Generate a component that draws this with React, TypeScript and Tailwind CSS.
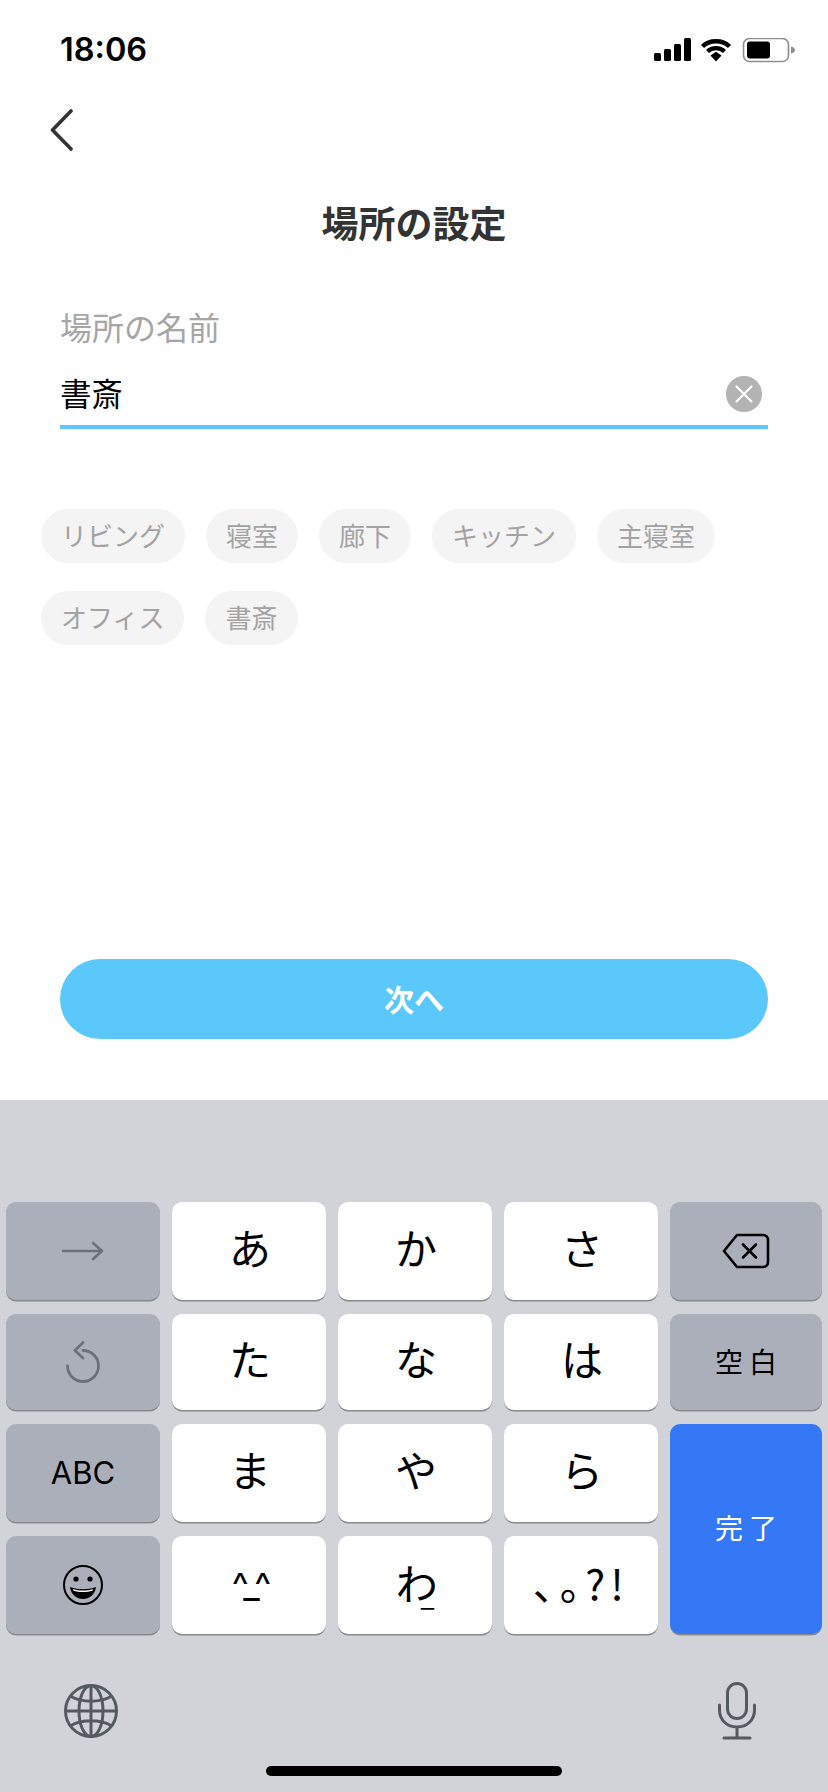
const font = { fontFamily: '"Noto Sans CJK JP", Inter, sans-serif' };

const chips = ['リビング', '寝室', '廊下', 'キッチン', '主寝室', 'オフィス', '書斎'];

function StatusIcons() {
  return (
    <svg width="142" height="26" viewBox="0 0 142 26" className="block">
      <rect x="0" y="15" width="7" height="8" rx="1.5" fill="#000" />
      <rect x="10" y="11" width="7" height="12" rx="1.5" fill="#000" />
      <rect x="20" y="6" width="7" height="17" rx="1.5" fill="#000" />
      <rect x="30" y="0" width="7" height="23" rx="1.5" fill="#000" />
      <path d="M48.5 8.5C55.5 1.5 68.5 1.5 75.5 8.5" fill="none" stroke="#000" strokeWidth="4.4" strokeLinecap="butt" />
      <path d="M53.5 13.5C58 9 66 9 70.5 13.5" fill="none" stroke="#000" strokeWidth="4.2" />
      <path d="M56.5 17.5L62 13.8L67.5 17.5L62 23.5Z" fill="#000" />
      <rect x="89.5" y="0.5" width="45" height="23" rx="6" fill="none" stroke="#8e8e8e" strokeWidth="1.6" />
      <rect x="93" y="3.5" width="23" height="17" rx="3" fill="#000" />
      <path d="M137 8.5C139.5 9 141 10.5 141 12C141 13.5 139.5 15 137 15.5Z" fill="#8e8e8e" />
    </svg>
  );
}

function Key({ children, kind = 'white', className = '' }: { children: React.ReactNode; kind?: 'white' | 'gray' | 'blue'; className?: string }) {
  const bg = kind === 'white' ? 'bg-white text-black' : kind === 'gray' ? 'bg-[#abafba] text-black' : 'bg-[#3478f6] text-white';
  return (
    <div className={`flex items-center justify-center rounded-[10px] shadow-[0_1.5px_0_#898a8e] ${bg} ${className}`}>
      {children}
    </div>
  );
}

function Kana({ children }: { children: React.ReactNode }) {
  return <Key className="pb-[8px] pl-[2px] text-[42px] leading-none">{children}</Key>;
}

export default function App() {
  return (
    <div className="flex h-[1792px] w-[828px] flex-col overflow-hidden bg-white" style={font}>
      <div className="flex h-[1100px] flex-col">
        <div className="flex h-[99px] items-center justify-between pl-[60px] pr-[32px] pt-[2px]">
          <span className="text-[32.5px] font-semibold leading-none text-black" style={{ fontFamily: 'Inter, sans-serif' }}>18:06</span>
          <StatusIcons />
        </div>

        <svg width="24" height="42" viewBox="0 0 24 42" className="ml-[50px] mt-[10px] block">
          <path d="M21 2L2.5 21L21 40" fill="none" stroke="#333" strokeWidth="3.6" strokeLinecap="round" strokeLinejoin="round" />
        </svg>

        <h1 className="mt-[53px] text-center text-[37px] font-bold leading-[36px] text-[#333]">場所の設定</h1>

        <div className="mt-[70px] px-[60px]">
          <p className="text-[32px] leading-[32px] text-[#a6a6a6]">場所の名前</p>
          <div className="mt-[22px] flex h-[60px] items-center justify-between">
            <span className="mb-[3px] text-[31.5px] leading-none text-black">書斎</span>
            <span className="mr-[6px] flex h-[36px] w-[36px] items-center justify-center rounded-full bg-[#b3b3b3]">
              <svg width="20" height="20" viewBox="0 0 20 20">
                <path d="M2.5 2.5L17.5 17.5M17.5 2.5L2.5 17.5" stroke="#fff" strokeWidth="2.2" strokeLinecap="round" />
              </svg>
            </span>
          </div>
          <div className="mt-[1px] h-[4px] w-[708px] bg-[#5ac8fa]" />
        </div>

        <div className="mt-[80px] flex w-[760px] flex-wrap gap-x-[21px] gap-y-[28px] pl-[41px]">
          {chips.map((chip) => (
            <span key={chip} className="flex h-[54px] items-center rounded-full bg-[#f4f4f4] px-[20px] pb-[3px] text-[26px] leading-none text-[#a3a3a3]">
              {chip}
            </span>
          ))}
        </div>

        <button className="mx-[60px] mt-[314px] flex h-[80px] w-[708px] items-center justify-center rounded-full bg-[#5ac8fa] pb-[2px] text-[30px] font-bold text-white">
          次へ
        </button>
      </div>

      <div className="flex-1 bg-[#d1d3d9]">
        <div className="mt-[102px] grid grid-cols-[154px_154px_154px_154px_152px] grid-rows-[98px_96px_98px_98px] gap-x-[12px] gap-y-[14px] pl-[6px]">
          <Key kind="gray">
            <svg width="42" height="20" viewBox="0 0 42 20">
              <path d="M1 10H40M31 2L40 10L31 18" fill="none" stroke="#6d7079" strokeWidth="2.6" strokeLinecap="round" strokeLinejoin="round" />
            </svg>
          </Key>
          <Kana>あ</Kana>
          <Kana>か</Kana>
          <Kana>さ</Kana>
          <Key kind="gray">
            <svg width="48" height="36" viewBox="0 0 48 36">
              <path d="M15 2H41C44 2 46 4 46 7V29C46 32 44 34 41 34H15L2 18Z" fill="none" stroke="#000" strokeWidth="2.6" strokeLinejoin="round" />
              <path d="M21 11.5L34 24.5M34 11.5L21 24.5" stroke="#000" strokeWidth="2.6" strokeLinecap="round" />
            </svg>
          </Key>

          <Key kind="gray">
            <svg width="36" height="42" viewBox="0 0 36 42">
              <path d="M18 9.5A15.5 15.5 0 1 1 2.5 25" fill="none" stroke="#6d7079" strokeWidth="2.8" strokeLinecap="round" />
              <path d="M18 1.5L10 9.5L18 17" fill="none" stroke="#6d7079" strokeWidth="2.8" strokeLinecap="round" strokeLinejoin="round" />
            </svg>
          </Key>
          <Kana>た</Kana>
          <Kana>な</Kana>
          <Kana>は</Kana>
          <Key kind="gray" className="pb-[2px] pl-[6px] text-[28px] tracking-[6px]">空白</Key>

          <Key kind="gray" className="text-[31px]"><span style={{ fontFamily: 'Inter, sans-serif' }}>ABC</span></Key>
          <Kana>ま</Kana>
          <Kana>や</Kana>
          <Kana>ら</Kana>
          <Key kind="blue" className="row-span-2 pb-[4px] pl-[6px] text-[28px] tracking-[6px]">完了</Key>

          <Key kind="gray">
            <svg width="42" height="42" viewBox="0 0 42 42">
              <circle cx="21" cy="21" r="19" fill="none" stroke="#000" strokeWidth="2" />
              <circle cx="14" cy="15" r="2.6" fill="#000" />
              <circle cx="28" cy="15" r="2.6" fill="#000" />
              <path d="M8 23C16 26 26 26 34 23C33 31 27 35 21 35C15 35 9 31 8 23Z" fill="#000" />
              <path d="M11 25C17 27 25 27 31 25L30.5 26.8C25 28.5 17 28.5 11.5 26.8Z" fill="#fff" />
            </svg>
          </Key>
          <Key className="pl-[2px] text-[36px] leading-none">
            <span className="tracking-[-3px]" style={{ fontFamily: 'Inter, sans-serif' }}>^_^</span>
          </Key>
          <Key className="text-[42px] leading-none">
            <span className="relative top-[-3px]">わ</span>
            <span className="relative top-[12px] ml-[-17px] text-[30px] font-light" style={{ fontFamily: 'Inter, sans-serif' }}>_</span>
          </Key>
          <Key className="pb-[6px] text-[42px] leading-none">
            <span className="tracking-[5px] [font-feature-settings:'palt']">、。?!</span>
          </Key>
        </div>

        <div className="mt-[49px] flex h-[56px] items-center justify-between pl-[64px] pr-[72px]">
          <svg width="54" height="54" viewBox="0 0 54 54" fill="none" stroke="#555960" strokeWidth="3">
            <circle cx="27" cy="27" r="25.5" />
            <ellipse cx="27" cy="27" rx="12" ry="25.5" />
            <path d="M27 1.5V52.5M1.5 27H52.5M6 12C18 19 36 19 48 12M6 42C18 35 36 35 48 42" />
          </svg>
          <svg width="38" height="58" viewBox="0 0 38 58" fill="none" stroke="#555960" strokeWidth="3" strokeLinecap="round">
            <rect x="9.5" y="1.5" width="19" height="35" rx="9.5" />
            <path d="M1.5 23V28C1.5 38 9 45 19 45C29 45 36.5 38 36.5 28V23M19 45V56M6 56H32" />
          </svg>
        </div>

        <div className="mx-auto mt-[27px] h-[10px] w-[296px] rounded-full bg-black" />
      </div>
    </div>
  );
}
